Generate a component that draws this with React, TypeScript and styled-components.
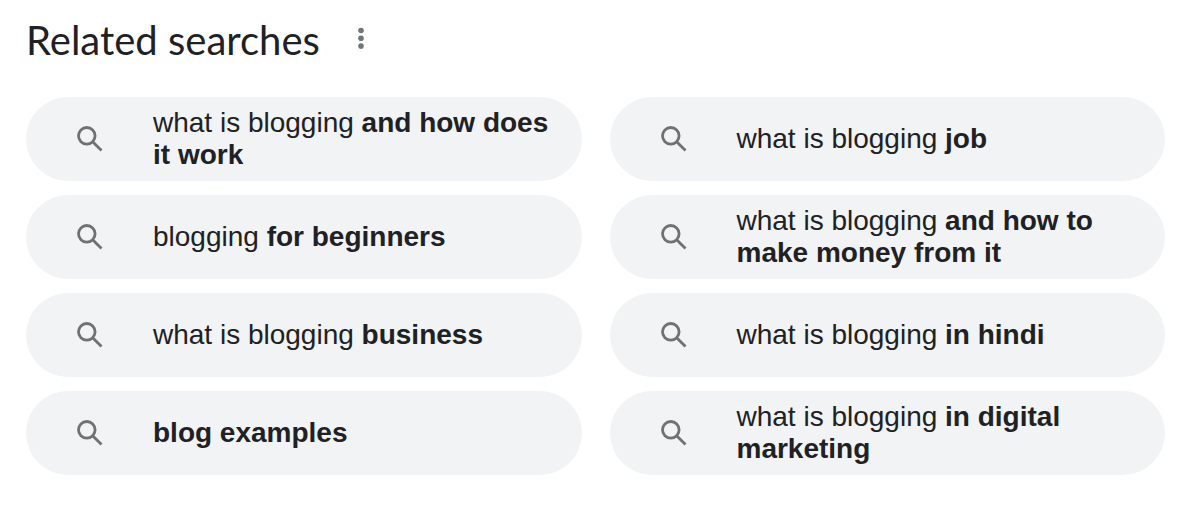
import React from "react";
import styled, { createGlobalStyle } from "styled-components";

const GlobalStyle = createGlobalStyle`
  *, *::before, *::after { box-sizing: border-box; }
  body {
    margin: 0;
    background: #ffffff;
    color: #202124;
    font-family: "Liberation Sans", Arial, sans-serif;
  }
`;

const Section = styled.section`
  padding: 16px 35px 32px 26px;
`;

const Header = styled.header`
  display: flex;
  align-items: flex-start;
  gap: 25px;
  height: 48px;
  margin-bottom: 33px;
`;

const Title = styled.h2`
  margin: 0;
  font-family: Lato, sans-serif;
  font-size: 40px;
  font-weight: 400;
  line-height: 48px;
`;

const MenuButton = styled.button`
  display: flex;
  align-items: center;
  justify-content: center;
  width: 32px;
  height: 44px;
  padding: 0;
  border: 0;
  background: transparent;
  color: #70757a;
  cursor: pointer;
`;

const Grid = styled.ul`
  display: grid;
  grid-template-columns: repeat(2, minmax(0, 1fr));
  gap: 14px 28px;
  margin: 0;
  padding: 0;
  list-style: none;
`;

const Pill = styled.a`
  display: flex;
  align-items: center;
  gap: 47px;
  min-height: 84px;
  padding: 10px 28px 10px 48px;
  border-radius: 42px;
  background: #f1f3f4;
  color: #202124;
  font-size: 28px;
  line-height: 32px;
  text-decoration: none;
`;

const SearchIcon = styled.svg`
  flex: none;
  width: 32px;
  height: 32px;
  fill: none;
  stroke: #707172;
  stroke-width: 2.8;
`;

const searches = [
  { plain: "what is blogging ", bold: "and how does it work" },
  { plain: "what is blogging ", bold: "job" },
  { plain: "blogging ", bold: "for beginners" },
  { plain: "what is blogging ", bold: "and how to make money from it" },
  { plain: "what is blogging ", bold: "business" },
  { plain: "what is blogging ", bold: "in hindi" },
  { plain: "", bold: "blog examples" },
  { plain: "what is blogging ", bold: "in digital marketing" },
];

export default function App() {
  return (
    <Section aria-labelledby="related-title">
      <GlobalStyle />
      <Header>
        <Title id="related-title">Related searches</Title>
        <MenuButton type="button" aria-label="About this result">
          <svg width="32" height="32" viewBox="0 0 32 32" fill="currentColor" aria-hidden="true">
            <circle cx="16" cy="8.5" r="2.8" />
            <circle cx="16" cy="16.3" r="2.8" />
            <circle cx="16" cy="24.1" r="2.8" />
          </svg>
        </MenuButton>
      </Header>
      <Grid>
        {searches.map(({ plain, bold }) => (
          <li key={plain + bold}>
            <Pill href="#">
              <SearchIcon viewBox="0 0 32 32" aria-hidden="true">
                <circle cx="12.8" cy="12.8" r="8.3" />
                <path d="M18.4 18.4 L27.5 27.5" />
              </SearchIcon>
              <span>
                {plain}
                <b>{bold}</b>
              </span>
            </Pill>
          </li>
        ))}
      </Grid>
    </Section>
  );
}
